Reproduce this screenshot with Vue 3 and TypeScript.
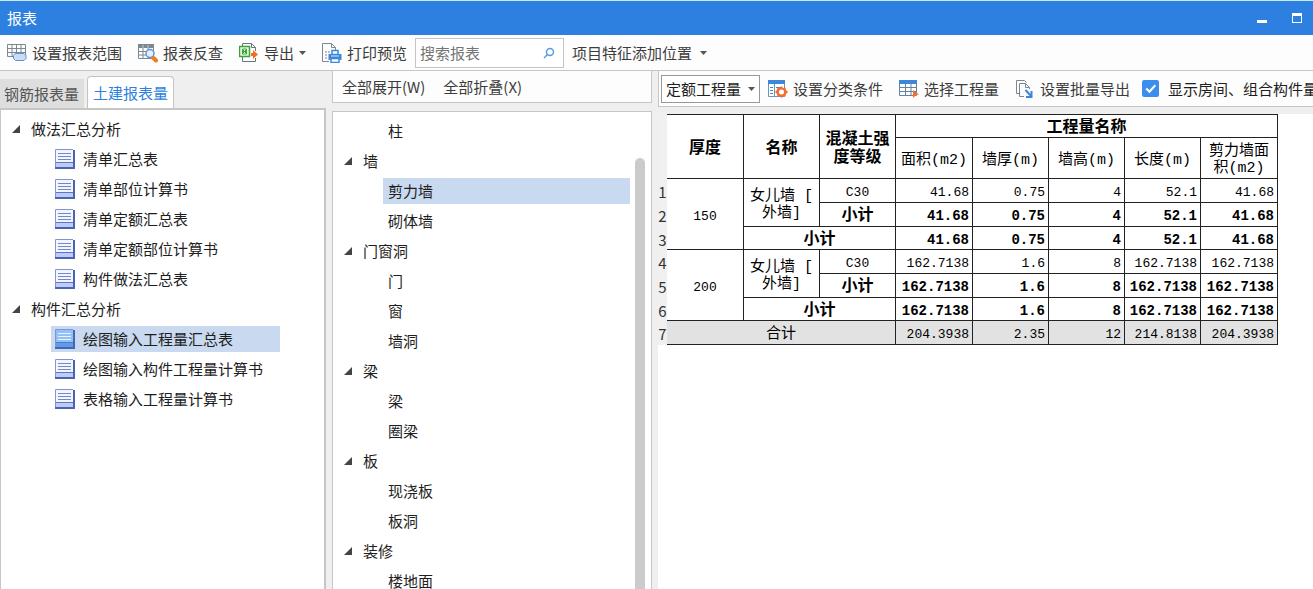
<script setup lang="ts">
import { ref } from 'vue'

interface TreeItem { id: string; label: string }
interface TreeGroup { label: string; items: TreeItem[] }
interface ReportRow {
  no: number
  kind: 'plain' | 'sub' | 'subtotal' | 'total'
  thickness?: string
  name?: string[]
  label: string
  values: string[]
}

const reportGroups: TreeGroup[] = [
  {
    label: '做法汇总分析',
    items: [
      { id: 'list', label: '清单汇总表' },
      { id: 'listPart', label: '清单部位计算书' },
      { id: 'quota', label: '清单定额汇总表' },
      { id: 'quotaPart', label: '清单定额部位计算书' },
      { id: 'method', label: '构件做法汇总表' },
    ],
  },
  {
    label: '构件汇总分析',
    items: [
      { id: 'drawSum', label: '绘图输入工程量汇总表' },
      { id: 'drawCalc', label: '绘图输入构件工程量计算书' },
      { id: 'tableCalc', label: '表格输入工程量计算书' },
    ],
  },
]

const elementGroups: TreeGroup[] = [
  { label: '', items: [{ id: 'column', label: '柱' }] },
  { label: '墙', items: [{ id: 'shear', label: '剪力墙' }, { id: 'masonry', label: '砌体墙' }] },
  { label: '门窗洞', items: [{ id: 'door', label: '门' }, { id: 'window', label: '窗' }, { id: 'hole', label: '墙洞' }] },
  { label: '梁', items: [{ id: 'beam', label: '梁' }, { id: 'ring', label: '圈梁' }] },
  { label: '板', items: [{ id: 'slab', label: '现浇板' }, { id: 'slabHole', label: '板洞' }] },
  { label: '装修', items: [{ id: 'floor', label: '楼地面' }] },
]

const measures: string[][] = [['面积(m2)'], ['墙厚(m)'], ['墙高(m)'], ['长度(m)'], ['剪力墙面', '积(m2)']]

const rows: ReportRow[] = [
  { no: 1, kind: 'plain', thickness: '150', name: ['女儿墙 [', '外墙]'], label: 'C30', values: ['41.68', '0.75', '4', '52.1', '41.68'] },
  { no: 2, kind: 'sub', label: '小计', values: ['41.68', '0.75', '4', '52.1', '41.68'] },
  { no: 3, kind: 'subtotal', label: '小计', values: ['41.68', '0.75', '4', '52.1', '41.68'] },
  { no: 4, kind: 'plain', thickness: '200', name: ['女儿墙 [', '外墙]'], label: 'C30', values: ['162.7138', '1.6', '8', '162.7138', '162.7138'] },
  { no: 5, kind: 'sub', label: '小计', values: ['162.7138', '1.6', '8', '162.7138', '162.7138'] },
  { no: 6, kind: 'subtotal', label: '小计', values: ['162.7138', '1.6', '8', '162.7138', '162.7138'] },
  { no: 7, kind: 'total', label: '合计', values: ['204.3938', '2.35', '12', '214.8138', '204.3938'] },
]

const spans: Record<ReportRow['kind'], number> = { plain: 1, sub: 1, subtotal: 2, total: 3 }

const keyword = ref('')
const quantity = ref('定额工程量')
const showRooms = ref(true)
const activeTab = ref('civil')
const activeReport = ref('drawSum')
const activeElement = ref('shear')
</script>

<template>
  <div class="window">
    <header class="titlebar">
      <h1>报表</h1>
      <button class="winbtn" type="button" aria-label="最小化">
        <svg width="12" height="12" viewBox="0 0 12 12"><path d="M1 8h10v3H1z" fill="#fff" /></svg>
      </button>
      <button class="winbtn" type="button" aria-label="最大化">
        <svg width="12" height="12" viewBox="0 0 12 12"><path d="M1 1h10v10H1zM2 4v6h8V4z" fill="#fff" fill-rule="evenodd" /></svg>
      </button>
    </header>

    <nav class="toolbar">
      <button class="tool" type="button">
        <svg width="20" height="20" viewBox="0 0 20 20" fill="none">
          <path d="M.5 1.500h18v12H.5zM.5 5.500h18M.5 9.500h18M5 1.500v12M9.500 1.500v12M14 1.500v12" stroke="#7d8790" />
          <path d="M8 10.500h9l2 2v3l-2 2H8.500l-2-2v-3z" fill="#c9ddf6" stroke="#5b93d6" />
        </svg>
        <span>设置报表范围</span>
      </button>
      <button class="tool" type="button">
        <svg width="20" height="20" viewBox="0 0 20 20" fill="none">
          <path d="M.5 1.500h15v14H.5zM.5 8.500h15M.5 12h15M5 4v11.500M10 4v11.500" stroke="#7d8790" />
          <path d="M0 1h16v4H0z" fill="#7d8790" /><path d="M5 2v3M10 2v3" stroke="#c7cdd2" />
          <circle cx="12" cy="10.500" r="4" fill="#e3effc" stroke="#5b93d6" stroke-width="1.500" />
          <path d="M15.500 15l2.500 2.500" stroke="#f07c1c" stroke-width="4" stroke-linecap="round" />
        </svg>
        <span>报表反查</span>
      </button>
      <button class="tool" type="button">
        <svg width="20" height="20" viewBox="0 0 20 20" fill="none">
          <path d="M3.500 3V.5h9l4 4V8M3.500 14v4.500h13V15" stroke="#68747e" /><path d="M12.500.5v4h4" stroke="#68747e" />
          <path d="M.5 3.500h10v10H.5z" fill="#e9f8e4" stroke="#39a335" stroke-width="1.500" />
          <path d="M3 6l5 5M8 6l-5 5M3 8.500h5M3.500 6h4v5h-4z" stroke="#39a335" />
          <path d="M12 10h2V7l5 4.500-5 4.500v-3h-2z" fill="#f36c21" />
        </svg>
        <span>导出</span>
        <svg class="caret" width="7" height="4" viewBox="0 0 7 4"><path d="M0 0h7L3.500 4z" fill="#555" /></svg>
      </button>
      <button class="tool" type="button">
        <svg width="20" height="20" viewBox="0 0 20 20" fill="none">
          <path d="M7 18.500H.5V.5h9l4 4V7M9.500.5v4h4" stroke="#7d8790" />
          <path d="M3 9h2M3 12h2M3 15h2M6 9h2" stroke="#7d8790" />
          <path d="M10 7.500h6v4h-6zM9 15.500h8v4H9z" fill="#fff" stroke="#3a87dc" stroke-width="1.500" />
          <path d="M6.500 11h13v6h-2v-2h-9v2h-2z" fill="#3a87dc" />
          <path d="M9 13h8" stroke="#d6e8fb" />
        </svg>
        <span>打印预览</span>
      </button>
      <label class="search">
        <input v-model="keyword" type="text" placeholder="搜索报表" aria-label="搜索报表" />
        <svg width="12" height="12" viewBox="0 0 12 12" fill="none">
          <circle cx="7" cy="5" r="3.500" stroke="#5a9be6" stroke-width="1.500" /><path d="M4.500 7.500L1 11" stroke="#5a9be6" stroke-width="1.500" />
        </svg>
      </label>
      <button class="tool" type="button">
        <span>项目特征添加位置</span>
        <svg class="caret wide" width="7" height="4" viewBox="0 0 7 4"><path d="M0 0h7L3.500 4z" fill="#555" /></svg>
      </button>
    </nav>

    <main class="body">
      <section class="left">
        <div class="tabs">
          <button type="button" :class="['tab', { active: activeTab === 'rebar' }]" @click="activeTab = 'rebar'">钢筋报表量</button>
          <button type="button" :class="['tab', { active: activeTab === 'civil' }]" @click="activeTab = 'civil'">土建报表量</button>
        </div>
        <div class="tree reports">
          <template v-for="group in reportGroups" :key="group.label">
            <div class="group">
              <svg width="8" height="8" viewBox="0 0 8 8"><path d="M8 0v8H0z" fill="#444" /></svg>
              <span>{{ group.label }}</span>
            </div>
            <button
              v-for="item in group.items" :key="item.id" type="button"
              :class="['leaf', { selected: item.id === activeReport }]" @click="activeReport = item.id"
            >
              <svg width="20" height="20" viewBox="0 0 20 20" fill="none">
                <path d="M1 1h18v18H1z" :fill="item.id === activeReport ? '#8fc0f8' : '#f2f5ff'" />
                <path d="M1 13h18v6H1z" :fill="item.id === activeReport ? '#5b9cec' : '#bccbfa'" />
                <path d="M.5 19V.5H18" stroke="#8195cf" />
                <path d="M1 13.500h18" stroke="#5c76c0" />
                <path d="M19 1v18H0" stroke="#4a64b0" stroke-width="2" />
                <path d="M3 4.500h13M3 7.500h13M3 10.500h13" :stroke="item.id === activeReport ? '#e8f3ff' : '#7288cc'" />
              </svg>
              <span>{{ item.label }}</span>
            </button>
          </template>
        </div>
      </section>

      <section class="middle">
        <div class="expandbar">
          <button type="button">全部展开(W)</button>
          <button type="button">全部折叠(X)</button>
        </div>
        <div class="scrollbox">
          <div class="tree elements">
            <template v-for="group in elementGroups" :key="group.label">
              <div v-if="group.label" class="group">
                <svg width="8" height="8" viewBox="0 0 8 8"><path d="M8 0v8H0z" fill="#444" /></svg>
                <span>{{ group.label }}</span>
              </div>
              <button
                v-for="item in group.items" :key="item.id" type="button"
                :class="['leaf', { selected: item.id === activeElement }]" @click="activeElement = item.id"
              >{{ item.label }}</button>
            </template>
          </div>
          <div class="track"><div class="thumb"></div></div>
        </div>
      </section>

      <section class="right">
        <div class="toolbar reportbar">
          <div class="picker">
            <select v-model="quantity" aria-label="工程量类型">
              <option>定额工程量</option>
              <option>清单工程量</option>
            </select>
            <svg width="7" height="4" viewBox="0 0 7 4"><path d="M0 0h7L3.500 4z" fill="#555" /></svg>
          </div>
          <button class="tool" type="button">
            <svg width="20" height="20" viewBox="0 0 20 20" fill="none">
              <path d="M.5 1.500h16v16H.5z" fill="#fff" stroke="#6d92bd" /><path d="M0 1h17v4H0z" fill="#3f86d8" />
              <path d="M6.500 5v12.500" stroke="#6d92bd" /><path d="M2 8.500h3M2 11.500h3M2 14.500h3M8 8.500h6" stroke="#3f86d8" />
              <path d="M13.500 7l1.500 2 2.500-.5.5 2.500 2 2-2 2-.5 2.500-2.500-.5-1.500 2-1.500-2-2.500.5-.5-2.500-2-2 2-2 .5-2.500 2.500.5z" fill="#f26f2c" />
              <circle cx="13.500" cy="13" r="2.500" fill="#fff" />
            </svg>
            <span>设置分类条件</span>
          </button>
          <button class="tool" type="button">
            <svg width="20" height="20" viewBox="0 0 20 20" fill="none">
              <path d="M.5 1.500h17v15H.5zM.5 8.500h17M.5 12.500h17M6.500 4v12.500M12 4v12.500" stroke="#6683a5" />
              <path d="M0 1h18v4H0z" fill="#3f86d8" /><path d="M14 11l6 4.500-3 .5-3 3z" fill="#f26f2c" />
            </svg>
            <span>选择工程量</span>
          </button>
          <button class="tool" type="button">
            <svg width="20" height="20" viewBox="0 0 20 20" fill="none">
              <path d="M4 14.500H1.500v-13h8l2 2" stroke="#7d8790" />
              <path d="M9 17.500H4.500v-13h6l4 4V10M10.500 4.500v4h4" stroke="#7d8790" />
              <path d="M10.500 11l5.500 6M16.500 12v6H11" stroke="#3a87dc" stroke-width="2" />
            </svg>
            <span>设置批量导出</span>
          </button>
          <label class="check">
            <input v-model="showRooms" type="checkbox" />
            <svg width="17" height="17" viewBox="0 0 16 16" fill="none">
              <rect width="16" height="16" rx="2" :fill="showRooms ? '#3b8eee' : '#ccc'" />
              <path d="M4 8l3 3 5.500-6" stroke="#fff" stroke-width="2" />
            </svg>
            <span>显示房间、组合构件量</span>
          </label>
        </div>

        <div class="sheet">
          <table>
            <colgroup>
              <col class="c-no" /><col class="c-wide" /><col /><col /><col class="c-wide" /><col /><col /><col /><col class="c-wide" />
            </colgroup>
            <thead>
              <tr class="h1">
                <td class="no"></td>
                <th rowspan="2">厚度</th>
                <th rowspan="2">名称</th>
                <th rowspan="2">混凝土强<br />度等级</th>
                <th colspan="5">工程量名称</th>
              </tr>
              <tr class="h2">
                <td class="no"></td>
                <th v-for="m in measures" :key="m[0]" class="measure">
                  <template v-for="(line, i) in m" :key="i"><br v-if="i" />{{ line }}</template>
                </th>
              </tr>
            </thead>
            <tbody>
              <tr v-for="row in rows" :key="row.no" :class="row.kind">
                <th class="no" scope="row">{{ row.no }}</th>
                <td v-if="row.thickness" rowspan="3">{{ row.thickness }}</td>
                <td v-if="row.name" class="name" rowspan="2">
                  <template v-for="(line, i) in row.name" :key="i"><br v-if="i" />{{ line }}</template>
                </td>
                <td :colspan="spans[row.kind]" class="label">{{ row.label }}</td>
                <td v-for="(v, i) in row.values" :key="i" class="num">{{ v }}</td>
              </tr>
            </tbody>
          </table>
        </div>
      </section>
    </main>
  </div>
</template>

<style>
body {
  margin: 0;
  overflow: hidden;
}
</style>

<style scoped>
.window {
  display: flex;
  flex-direction: column;
  height: 100vh;
  overflow: hidden;
  background: #efefef;
  color: #1e1e1e;
  font: 15px/20px "Noto Sans CJK SC", sans-serif;
}
.window * { box-sizing: border-box; }
button, input, select { font: inherit; color: inherit; }
button {
  padding: 0;
  border: 0;
  background: none;
  white-space: nowrap;
}
svg { flex: none; }

.titlebar {
  display: flex;
  flex: none;
  align-items: center;
  gap: 23px;
  height: 35px;
  padding: 0 10px 0 7px;
  border-top: 1px solid #c8e8fb;
  background: #2d7fe0;
  color: #fff;
}
.titlebar h1 {
  flex: 1;
  margin: 0;
  font-size: 15px;
  font-weight: 400;
}
.winbtn { display: flex; }

.toolbar {
  display: flex;
  flex: none;
  align-items: center;
  height: 36px;
  border-bottom: 1px solid #c6c6c6;
  background: #fdfdfd;
  color: #3c3c3c;
}
.tool {
  display: flex;
  flex: none;
  align-items: center;
  gap: 5px;
  padding: 0 8px;
}
nav .tool:first-child { padding-left: 7px; }
.caret.wide { margin-left: 3px; }
.search {
  display: flex;
  flex: none;
  align-items: center;
  width: 149px;
  height: 30px;
  padding: 0 8px 0 4px;
  border: 1px solid #c4c4c4;
  background: #fff;
}
.search input {
  flex: 1;
  min-width: 0;
  padding: 0;
  border: 0;
  outline: 0;
  background: none;
}
.search input::placeholder { color: #757575; opacity: 1; }

.body {
  display: flex;
  flex: 1;
  min-height: 0;
}
.left {
  display: flex;
  flex: none;
  flex-direction: column;
  width: 326px;
}
.tabs {
  display: flex;
  align-items: flex-end;
  gap: 3px;
  height: 37px;
}
.tab {
  height: 29px;
  padding: 0 5px 0 4px;
  background: #dedede;
  color: #555;
}
.tab.active {
  height: 32px;
  padding: 0 5px;
  border: 1px solid #c4c4c4;
  border-bottom: 0;
  border-radius: 4px 4px 0 0;
  background: #fff;
  color: #2d7fe0;
}
.tree {
  display: flex;
  flex-direction: column;
  flex: 1;
  min-width: 0;
  padding-top: 4px;
}
.reports {
  border: 1px solid #c6c6c6;
  border-width: 2px 2px 0 1px;
  background: #fff;
}
.group {
  display: flex;
  flex: none;
  align-items: center;
  gap: 11px;
  height: 30px;
  padding-left: 11px;
}
.leaf {
  display: flex;
  flex: none;
  align-items: center;
  height: 26px;
  margin: 2px 0;
  text-align: left;
}
.reports .leaf {
  gap: 8px;
  margin-left: 50px;
  margin-right: 44px;
  padding-left: 4px;
}
.leaf.selected { background: #c8d9f0; }

.middle {
  display: flex;
  flex: none;
  flex-direction: column;
  gap: 8px;
  width: 320px;
  margin: 0 6px;
}
.expandbar {
  display: flex;
  flex: none;
  align-items: center;
  gap: 18px;
  height: 32px;
  padding-left: 9px;
  border: 1px solid #c6c6c6;
  border-top: 0;
  background: #fdfdfd;
  color: #3c3c3c;
}
.scrollbox {
  display: flex;
  flex: 1;
  min-height: 0;
  overflow: hidden;
  border: 1px solid #c6c6c6;
  border-bottom: 0;
  background: #fff;
}
.elements .leaf {
  margin-left: 50px;
  padding-left: 5px;
}
.track {
  width: 21px;
  padding: 46px 6px 0 5px;
}
.thumb {
  height: 100%;
  border-radius: 5px 5px 0 0;
  background: #cbcbcb;
}

.right {
  display: flex;
  flex: 1;
  flex-direction: column;
  gap: 7px;
  min-width: 0;
}
.reportbar {
  padding-left: 2px;
  border-left: 1px solid #c6c6c6;
  overflow: hidden;
}
.picker {
  position: relative;
  flex: none;
  width: 99px;
}
.picker select {
  display: block;
  width: 100%;
  height: 28px;
  padding: 0 0 0 4px;
  border: 1px solid #999;
  border-radius: 0;
  background: #fff;
  color: #1e1e1e;
  appearance: none;
}
.picker svg {
  position: absolute;
  top: 12px;
  right: 5px;
  pointer-events: none;
}
.check {
  display: flex;
  flex: none;
  align-items: center;
  gap: 9px;
  margin-left: 4px;
  color: #1e1e1e;
  white-space: nowrap;
}
.check input {
  position: absolute;
  width: 16px;
  height: 16px;
  margin: 0;
  opacity: 0;
}

.sheet {
  flex: 1;
  min-height: 0;
  overflow: hidden;
  background: #fff;
}
table {
  width: 620px;
  table-layout: fixed;
  border-spacing: 0;
  color: #000;
  font: 13px/17px "Liberation Mono", "Noto Sans CJK SC", monospace;
}
col { width: 76px; }
.c-wide { width: 77px; }
.c-no { width: 9px; }
th, td {
  height: 24px;
  padding: 4px 0 0;
  border: 1px solid #222;
  border-width: 0 1px 1px 0;
  text-align: center;
  white-space: nowrap;
}
thead th { font-size: 16px; line-height: 18px; }
.h1 th { border-top: 1px solid #222; }
.h2 td, .h2 th { height: 41px; }
thead .measure { font-size: 15px; line-height: 17px; font-weight: 400; }
.name { font-size: 15px; }
.label { font-size: 13px; }
.num { padding-right: 3px; text-align: right; }
.sub .num, .subtotal .num { font-size: 14px; font-weight: 700; }
.sub .label, .subtotal .label { font-size: 16px; font-weight: 700; }
.subtotal th, .subtotal td { height: 23px; }
.total td { background: #e2e2e2; }
.total .label { font-size: 15px; }
table .no {
  padding: 2px 0 0;
  border: 0;
  background: #f0f0f0;
  color: #333;
  font: 15px/20px "Noto Sans CJK SC", sans-serif;
}
</style>
